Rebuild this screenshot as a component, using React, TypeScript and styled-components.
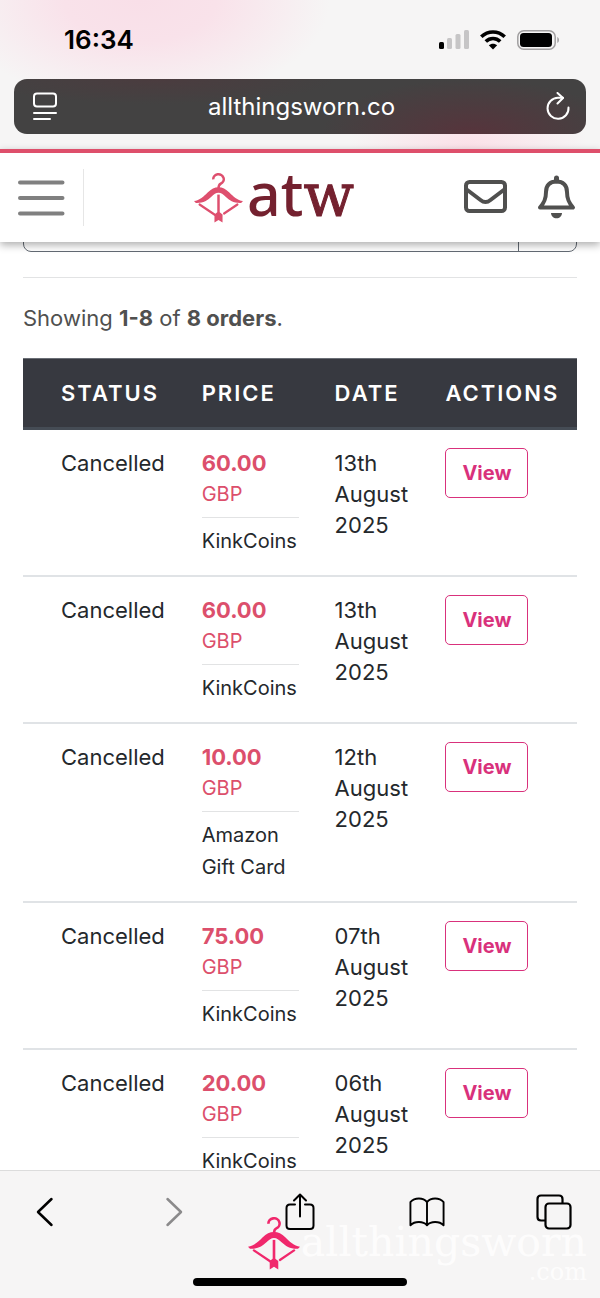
import React from "react";
import styled, { createGlobalStyle } from "styled-components";

const GlobalStyle = createGlobalStyle`
  *, *::before, *::after { box-sizing: border-box; }
  body {
    margin: 0;
    background: #fff;
    color: #24282c;
    font-family: Inter, "Liberation Sans", sans-serif;
    font-size: 22px;
    line-height: 31px;
  }
  button, input { font: inherit; }
`;

const Screen = styled.div`
  position: relative;
  display: flex;
  flex-direction: column;
  height: 100vh;
  overflow: hidden;
`;

const BrowserTop = styled.div`
  flex: none;
  padding: 0 14px 15px;
  background:
    radial-gradient(ellipse 190px 105px at 140px 0, #f9dfe8 0%, #f9e2ea 40%, rgba(250, 232, 238, 0) 100%),
    radial-gradient(ellipse 120px 80px at 78% 100%, #fbe0e8 0%, rgba(250, 236, 240, 0) 100%),
    #f6f5f5;
`;

const StatusBar = styled.div`
  display: flex;
  align-items: center;
  justify-content: space-between;
  height: 79px;
  padding: 0 26px 0 50px;
`;

const Clock = styled.time`
  color: #000;
  font-size: 26px;
  font-weight: 600;
`;

const StatusIcons = styled.div`
  display: flex;
  align-items: center;
  gap: 11px;
  svg { display: block; }
`;

const AddressBar = styled.div`
  display: flex;
  align-items: center;
  justify-content: space-between;
  height: 55px;
  padding: 0 15px 0 19px;
  border-radius: 13px;
  color: #fff;
  background:
    radial-gradient(ellipse 150px 55px at 80% 100%, #57343c 0%, rgba(67, 64, 65, 0) 100%),
    radial-gradient(ellipse 180px 25px at 25% 0, #4b3c3f 0%, rgba(67, 66, 66, 0) 100%),
    #434242;
`;

const Address = styled.span`
  font-size: 24px;
`;

const IconButton = styled.button`
  display: flex;
  align-items: center;
  justify-content: center;
  padding: 0;
  border: 0;
  background: none;
  color: inherit;
  svg { display: block; }
`;

const SiteHeader = styled.header`
  position: relative;
  z-index: 1;
  flex: none;
  display: flex;
  align-items: center;
  justify-content: space-between;
  height: 93px;
  padding: 0 24px 0 18px;
  border-top: 4px solid #de4f6b;
  background: #fff;
  box-shadow: 0 3px 8px rgba(0, 0, 0, 0.32);
`;

const MenuArea = styled.div`
  display: flex;
  align-items: center;
  height: 57px;
  padding-right: 18px;
  border-right: 1px solid #e6e6e6;
  color: #808080;
`;

const Logo = styled.a`
  display: flex;
  align-items: center;
  gap: 4px;
  color: #74212f;
  text-decoration: none;
`;

const LogoText = styled.span`
  padding-bottom: 6px;
  font-family: "Noto Sans", sans-serif;
  font-size: 59px;
  font-weight: 500;
  line-height: 60px;
`;

const LogoSlab = styled.span`
  font-family: "DejaVu Serif", serif;
  font-weight: 400;
  -webkit-text-stroke: 1px #74212f;
`;

const HeaderActions = styled.div`
  display: flex;
  align-items: center;
  gap: 30px;
  padding-bottom: 2px;
  color: #50504f;
`;

const Main = styled.main`
  flex: 1;
  min-height: 0;
  overflow: hidden;
  padding: 0 23px;
`;

const SearchForm = styled.form`
  display: flex;
  height: 50px;
  margin-top: -40px;
  border: 1px solid #636a73;
  border-radius: 8px;
  overflow: hidden;
`;

const SearchInput = styled.input`
  flex: 1;
  min-width: 0;
  border: 0;
  background: none;
`;

const SearchButton = styled.button`
  width: 58px;
  border: 0;
  border-left: 1px solid #636a73;
  background: none;
`;

const Divider = styled.hr<{ $gap: number }>`
  height: 1px;
  margin: ${(p) => p.$gap}px 0;
  border: 0;
  background: #e2e3e4;
`;

const Summary = styled.p`
  margin: 0 0 24px;
  color: #50504f;
  line-height: 31px;
`;

const OrdersTable = styled.table`
  width: 100%;
  table-layout: fixed;
  border-collapse: separate;
  border-spacing: 0;
`;

const HeadCell = styled.th<{ $width: string; $first?: boolean }>`
  width: ${(p) => p.$width};
  height: 72px;
  padding: 0 0 0 ${(p) => (p.$first ? 38 : 18)}px;
  border-top: 1px solid #6a6e75;
  border-bottom: 3px solid #454c55;
  background: #373940;
  color: #fff;
  font-weight: 600;
  letter-spacing: 2px;
  text-align: left;
  text-transform: uppercase;
`;

const Cell = styled.td<{ $first?: boolean }>`
  padding: 18px 18px 18px ${(p) => (p.$first ? 38 : 18)}px;
  border-bottom: 2px solid #e0e3e6;
  vertical-align: top;
`;

const Amount = styled.strong`
  display: block;
  color: #dc4f6c;
  font-weight: 700;
`;

const Currency = styled.span`
  display: block;
  color: #dc4f6c;
  font-size: 20px;
`;

const Method = styled.span`
  display: block;
  font-size: 20px;
  line-height: 32px;
`;

const ViewButton = styled.button`
  display: block;
  height: 50px;
  padding: 0 16px;
  border: 1px solid #d9317c;
  border-radius: 5px;
  background: #fff;
  color: #d9317c;
  font-size: 20px;
  font-weight: 700;
`;

const BrowserToolbar = styled.nav`
  flex: none;
  height: 128px;
  padding: 22px 28px 12px;
  border-top: 1px solid #dcdcdc;
  background: #f6f5f5;
  color: #000;
  display: flex;
  flex-direction: column;
  justify-content: space-between;
  align-items: center;
`;

const ToolbarRow = styled.div`
  display: flex;
  justify-content: space-between;
  width: 100%;
`;

const ToolbarButton = styled(IconButton)<{ $muted?: boolean }>`
  width: 36px;
  height: 38px;
  color: ${(p) => (p.$muted ? "#8b8a8b" : "#000")};
`;

const HomeIndicator = styled.div`
  width: 214px;
  height: 8px;
  border-radius: 4px;
  background: #000;
`;

const Watermark = styled.div`
  position: absolute;
  right: 13px;
  bottom: 9px;
  display: flex;
  align-items: flex-start;
  gap: 1px;
  color: rgba(255, 255, 255, 0.8);
  font-family: "DejaVu Serif", serif;
  pointer-events: none;
`;

const WatermarkText = styled.div`
  display: flex;
  flex-direction: column;
  align-items: flex-end;
  font-size: 41px;
  line-height: 50px;
`;

const WatermarkSuffix = styled.span`
  font-size: 24px;
  line-height: 22px;
  margin-top: -6px;
  padding-bottom: 6px;
`;

function BowHanger({ width, height, color }: { width: number; height: number; color: string }) {
  return (
    <svg width={width} height={height} viewBox="0 0 158 160" fill="none" aria-hidden="true">
      <path d="M62 20A17 16 0 1 1 86 34Q79 37 79 50" stroke={color} strokeWidth="8" />
      <path d="M0 90C18 87 32 74 44 62C56 50 66 45 79 45S102 50 114 62C126 74 140 87 158 90L152 96C128 97 115 88 102 76C93 68 88 63 79 63S65 68 56 76C43 88 30 97 6 96Z" fill={color} />
      <path d="M79 69V136" stroke={color} strokeWidth="8" />
      <path d="M18 101L67 134M140 101L97 130" stroke={color} strokeWidth="7" strokeLinecap="round" />
      <path d="M66 133L75 126H83L92 133V159L79 151L66 159Z" fill={color} />
    </svg>
  );
}

const SignalIcon = () => (
  <svg width="30" height="20" viewBox="0 0 30 20">
    <rect x="0" y="12" width="5" height="7" rx="1.5" fill="#000" />
    <rect x="8" y="8" width="5" height="11" rx="1.5" fill="#c6c5c6" />
    <rect x="16.500" y="4" width="5" height="15" rx="1.5" fill="#c6c5c6" />
    <rect x="25" y="0" width="5" height="19" rx="1.5" fill="#c6c5c6" />
  </svg>
);

const WifiIcon = () => (
  <svg width="26" height="20" viewBox="0 0 26 20" fill="none" stroke="#000" strokeWidth="3.600">
    <path d="M1.300 6.800C8 .3 18 .3 24.700 6.800" />
    <path d="M5.800 11.500C10 7.500 16 7.500 20.200 11.500" />
    <path d="M13 19.500L8.800 15.300C11 13.100 15 13.100 17.200 15.300Z" fill="#000" stroke="none" />
  </svg>
);

const BatteryIcon = () => (
  <svg width="43" height="20" viewBox="0 0 43 20">
    <rect x=".8" y=".8" width="37.400" height="18.400" rx="6" fill="none" stroke="#a19fa0" strokeWidth="1.500" />
    <rect x="3" y="3" width="32" height="14" rx="3.500" fill="#000" />
    <path d="M40.300 7C42.500 8 42.500 12 40.300 13Z" fill="#a19fa0" />
  </svg>
);

const PageMenuIcon = () => (
  <svg width="24" height="29" viewBox="0 0 24 29" fill="none" stroke="currentColor" strokeWidth="2" strokeLinecap="round">
    <rect x="1" y="1.500" width="22" height="13" rx="3" />
    <path d="M1 21H23M1 27H17" />
  </svg>
);

const ReloadIcon = () => (
  <svg width="25" height="29" viewBox="0 0 25 29" fill="none" stroke="currentColor" strokeWidth="2" strokeLinecap="round" strokeLinejoin="round">
    <path d="M22.500 15.500A10.500 10.500 0 1 1 12 5.800H17" />
    <path d="M11.500 1L17 6L11.500 11.500" />
  </svg>
);

const MenuIcon = () => (
  <svg width="47" height="36" viewBox="0 0 47 36" stroke="currentColor" strokeWidth="4" strokeLinecap="round">
    <path d="M2 2.500H44.500M2 18H44.500M2 33.500H44.500" />
  </svg>
);

const MailIcon = () => (
  <svg width="43" height="33" viewBox="0 0 43 33" fill="none" stroke="currentColor" strokeWidth="4">
    <rect x="2" y="2" width="39" height="29" rx="3.500" />
    <path d="M2 9L16.500 20Q21.500 24 26.500 20L41 9" />
  </svg>
);

const BellIcon = () => (
  <svg width="39" height="44" viewBox="0 0 39 44" fill="none" stroke="currentColor" strokeWidth="4" strokeLinecap="round" strokeLinejoin="round">
    <path d="M19.500 3V6" strokeWidth="5" />
    <path d="M3 32.500C7 28 9 24.500 9 17C9 10 13 6.500 19.500 6.500S30 10 30 17C30 24.500 32 28 36 32.500Z" />
    <path d="M14 38H25C25 41 22.500 43.300 19.500 43.300S14 41 14 38Z" fill="currentColor" stroke="none" />
  </svg>
);

const BackIcon = () => (
  <svg width="20" height="30" viewBox="0 0 20 30" fill="none" stroke="currentColor" strokeWidth="2.500" strokeLinecap="round" strokeLinejoin="round">
    <path d="M15.500 2L2 15L15.500 28" />
  </svg>
);

const ForwardIcon = () => (
  <svg width="20" height="30" viewBox="0 0 20 30" fill="none" stroke="currentColor" strokeWidth="2.500" strokeLinecap="round" strokeLinejoin="round">
    <path d="M4.500 2L18 15L4.500 28" />
  </svg>
);

const ShareIcon = () => (
  <svg width="30" height="38" viewBox="0 0 30 38" fill="none" stroke="currentColor" strokeWidth="2" strokeLinecap="round" strokeLinejoin="round">
    <path d="M10 11.500H5Q1.500 11.500 1.500 15V32.500Q1.500 36 5 36H25Q28.500 36 28.500 32.500V15Q28.500 11.500 25 11.500H20" />
    <path d="M15 23.500V1.500M9 7.500L15 1.500L21 7.500" />
  </svg>
);

const BookIcon = () => (
  <svg width="38" height="32" viewBox="0 0 38 32" fill="none" stroke="currentColor" strokeWidth="2" strokeLinejoin="round">
    <path d="M19 5.500C15 .5 6 .5 1.500 5.500V30C6 25.500 15 25.500 19 30C23 25.500 32 25.500 36.500 30V5.500C32 .5 23 .5 19 5.500V30" />
  </svg>
);

const TabsIcon = () => (
  <svg width="36" height="36" viewBox="0 0 36 36" fill="none" stroke="currentColor" strokeWidth="2.200">
    <path d="M9.500 26.500H5Q1.500 26.500 1.500 23V5Q1.500 1.500 5 1.500H23Q26.500 1.500 26.500 5V9" />
    <rect x="9.500" y="9.500" width="25" height="25" rx="3.500" />
  </svg>
);

interface Order {
  id: number;
  status: string;
  amount: string;
  method: string;
  date: string;
}

const orders: Order[] = [
  { id: 1, status: "Cancelled", amount: "60.00", method: "KinkCoins", date: "13th August 2025" },
  { id: 2, status: "Cancelled", amount: "60.00", method: "KinkCoins", date: "13th August 2025" },
  { id: 3, status: "Cancelled", amount: "10.00", method: "Amazon Gift Card", date: "12th August 2025" },
  { id: 4, status: "Cancelled", amount: "75.00", method: "KinkCoins", date: "07th August 2025" },
  { id: 5, status: "Cancelled", amount: "20.00", method: "KinkCoins", date: "06th August 2025" },
];

function OrderRow({ order }: { order: Order }) {
  return (
    <tr>
      <Cell $first>{order.status}</Cell>
      <Cell>
        <Amount>{order.amount}</Amount>
        <Currency>GBP</Currency>
        <Divider $gap={7} />
        <Method>{order.method}</Method>
      </Cell>
      <Cell>{order.date}</Cell>
      <Cell>
        <ViewButton type="button">View</ViewButton>
      </Cell>
    </tr>
  );
}

export default function App() {
  return (
    <>
      <GlobalStyle />
      <Screen>
        <BrowserTop>
          <StatusBar>
            <Clock>16:34</Clock>
            <StatusIcons>
              <SignalIcon />
              <WifiIcon />
              <BatteryIcon />
            </StatusIcons>
          </StatusBar>
          <AddressBar>
            <IconButton type="button" aria-label="Page menu"><PageMenuIcon /></IconButton>
            <Address>allthingsworn.co</Address>
            <IconButton type="button" aria-label="Reload"><ReloadIcon /></IconButton>
          </AddressBar>
        </BrowserTop>

        <SiteHeader>
          <MenuArea>
            <IconButton type="button" aria-label="Menu"><MenuIcon /></IconButton>
          </MenuArea>
          <Logo href="#">
            <BowHanger width={49} height={50} color="#de4f6e" />
            <LogoText>at<LogoSlab>w</LogoSlab></LogoText>
          </Logo>
          <HeaderActions>
            <IconButton type="button" aria-label="Messages"><MailIcon /></IconButton>
            <IconButton type="button" aria-label="Notifications"><BellIcon /></IconButton>
          </HeaderActions>
        </SiteHeader>

        <Main>
          <SearchForm>
            <SearchInput type="search" aria-label="Search orders" />
            <SearchButton type="button" aria-label="Search" />
          </SearchForm>
          <Divider $gap={25} />
          <Summary>
            Showing <strong>1-8</strong> of <strong>8 orders</strong>.
          </Summary>
          <OrdersTable>
            <thead>
              <tr>
                <HeadCell $width="29%" $first>Status</HeadCell>
                <HeadCell $width="24%">Price</HeadCell>
                <HeadCell $width="20%">Date</HeadCell>
                <HeadCell $width="27%">Actions</HeadCell>
              </tr>
            </thead>
            <tbody>
              {orders.map((order) => (
                <OrderRow key={order.id} order={order} />
              ))}
            </tbody>
          </OrdersTable>
        </Main>

        <BrowserToolbar aria-label="Browser">
          <ToolbarRow>
            <ToolbarButton type="button" aria-label="Back"><BackIcon /></ToolbarButton>
            <ToolbarButton type="button" aria-label="Forward" $muted><ForwardIcon /></ToolbarButton>
            <ToolbarButton type="button" aria-label="Share"><ShareIcon /></ToolbarButton>
            <ToolbarButton type="button" aria-label="Bookmarks"><BookIcon /></ToolbarButton>
            <ToolbarButton type="button" aria-label="Tabs"><TabsIcon /></ToolbarButton>
          </ToolbarRow>
          <HomeIndicator />
        </BrowserToolbar>

        <Watermark>
          <BowHanger width={52} height={53} color="#f0286c" />
          <WatermarkText>
            allthingsworn
            <WatermarkSuffix>.com</WatermarkSuffix>
          </WatermarkText>
        </Watermark>
      </Screen>
    </>
  );
}
